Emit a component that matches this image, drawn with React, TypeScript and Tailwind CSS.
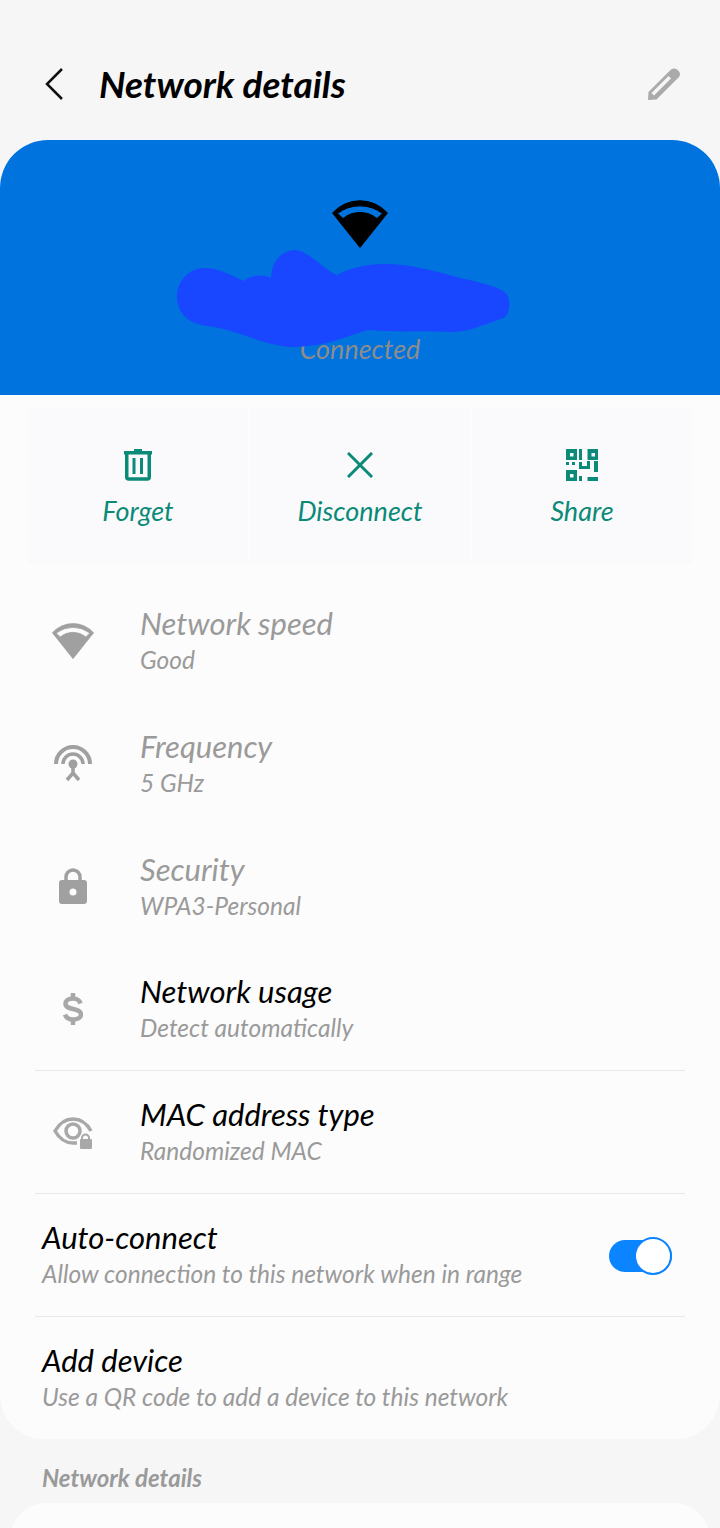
const font = "font-['Lato',sans-serif] italic";

function WifiGlyph({ className, width, height, fill }: { className?: string; width: number; height: number; fill: string }) {
  return (
    <svg className={className} width={width} height={height} viewBox="0 0 56 48">
      <path
        fillRule="evenodd"
        fill={fill}
        stroke={fill}
        strokeWidth="1"
        strokeLinejoin="round"
        d="M28 47.500L0.500 13A37 37 0 0 1 55.500 13ZM5.500 13.500L11 18.500A27 27 0 0 1 45 18.500L50.500 13.500A37 37 0 0 0 5.500 13.500Z"
      />
    </svg>
  );
}

function TrashIcon() {
  return (
    <svg width="30" height="32" viewBox="0 0 30 32" className="text-[#0b8a78]">
      <path d="M11 0h8v2h10v3.500H1V2h10z" fill="currentColor" />
      <path d="M3.750 5v23a2 2 0 0 0 2 2h18.500a2 2 0 0 0 2-2V5" fill="none" stroke="currentColor" strokeWidth="3.500" />
      <path d="M11 9v16M18.500 9v16" stroke="currentColor" strokeWidth="3" />
    </svg>
  );
}

function CloseIcon() {
  return (
    <svg width="26" height="26" viewBox="0 0 26 26">
      <path d="M2 2l22 22M24 2L2 24" stroke="#0b8a78" strokeWidth="3" strokeLinecap="square" />
    </svg>
  );
}

function QrIcon() {
  return (
    <svg width="32" height="32" viewBox="0 0 32 32" fill="#0b8a78">
      <path
        fillRule="evenodd"
        d="M0 0h11v11H0zM4 4v3.500h3.500V4zM21.500 0H32v11H21.500zM25.500 4v3.500H29V4zM0 21h11v11H0zM4 25v3.500h3.500V25z"
      />
      <path d="M13 0h3v11h-3zM0 13h3v3H0zM6 13h3v3H6zM13 13h3v4h5v-5h3v8H13zM28 12h4v11h-4zM13 27h3v5h-3zM21.500 28H32v4H21.500z" />
    </svg>
  );
}

function FrequencyIcon() {
  return (
    <svg width="40" height="38" viewBox="0 0 40 38" fill="none" stroke="#a0a0a0">
      <path d="M3 19a17 17 0 0 1 34 0" strokeWidth="4" />
      <path d="M10 19a10 10 0 0 1 20 0" strokeWidth="3.500" />
      <circle cx="20" cy="19" r="4.500" fill="#a0a0a0" stroke="none" />
      <path d="M20 22v7M20 28l-6 7M20 28l6 7" strokeWidth="3.500" />
    </svg>
  );
}

function LockIcon() {
  return (
    <svg width="28" height="36" viewBox="0 0 28 36" className="mb-[3px]">
      <path d="M7 16V9a7 7 0 0 1 14 0v7" fill="none" stroke="#a0a0a0" strokeWidth="3.500" />
      <path
        fillRule="evenodd"
        fill="#a0a0a0"
        d="M3 12h22a3 3 0 0 1 3 3v18a3 3 0 0 1-3 3H3a3 3 0 0 1-3-3V15a3 3 0 0 1 3-3zM14 20.500a3.500 3.500 0 1 0 0 7 3.500 3.500 0 0 0 0-7z"
      />
    </svg>
  );
}

function DollarIcon() {
  return (
    <svg width="20" height="34" viewBox="0 0 20 34" fill="none" stroke="#a8a8a8" strokeWidth="4.500" className="mb-[2px]">
      <path d="M10 1v5M10 28v5" />
      <path d="M17.500 11.500c-1-3-4-5-7.500-5-5 0-7.500 2.500-7.500 5.300 0 7 15.500 3.500 15.500 10.700 0 3-3 5-8 5-4 0-7-2-8-5" />
    </svg>
  );
}

function EyeLockIcon() {
  return (
    <svg width="40" height="34" viewBox="0 0 40 34" fill="none" stroke="#a8a8a8" strokeWidth="3.500">
      <path d="M38 15C33 6 27 3 20 3 12 3 6 8 2 15c4 7 10 12 18 12h4" />
      <circle cx="20" cy="15" r="7" />
      <path d="M29 24v-2a3.500 3.500 0 0 1 7 0v2" strokeWidth="2" />
      <rect x="27" y="23" width="12" height="10" rx="1" fill="#a8a8a8" stroke="none" />
    </svg>
  );
}

function ActionButton({ icon, label }: { icon: React.ReactNode; label: string }) {
  return (
    <div className="flex flex-col items-center bg-[#fafafc] pt-[42px]">
      <div className="flex h-[32px] items-center justify-center">{icon}</div>
      <span className={`${font} mt-[14px] text-[27px] leading-[32px] text-[#0b8a78]`}>{label}</span>
    </div>
  );
}

function InfoRow({
  icon,
  title,
  sub,
  muted,
  divider,
}: {
  icon: React.ReactNode;
  title: string;
  sub: string;
  muted?: boolean;
  divider?: boolean;
}) {
  return (
    <div className={`flex h-[123px] items-center pt-[1px] ${divider ? "border-b border-[#e8e8e8]" : ""}`}>
      <div className="flex w-[105px] shrink-0 items-center justify-center pr-[29px]">{icon}</div>
      <div>
        <div className={`${font} text-[31px] leading-[36px] ${muted ? "text-[#9a9a9a]" : "text-black"}`}>{title}</div>
        <div className={`${font} mt-[1px] text-[24.500px] leading-[36px] text-[#9a9a9a]`}>{sub}</div>
      </div>
    </div>
  );
}

export default function App() {
  return (
    <div className="h-[1528px] w-[720px] overflow-hidden bg-[#f6f6f6]">
      {/* Header */}
      <header className="flex h-[140px] items-center justify-between pl-[44px] pr-[39px] pt-[28px]">
        <div className="flex items-center">
          <svg width="20" height="34" viewBox="0 0 20 34" fill="none" stroke="#111" strokeWidth="2.500">
            <path d="M18 2L3 17l15 15" />
          </svg>
          <h1 className={`${font} ml-[35px] text-[37px] font-bold leading-[44px] text-black`}>Network details</h1>
        </div>
        <svg width="34" height="34" viewBox="0 0 34 34" fill="#aaa">
          <path
            fillRule="evenodd"
            d="M1 33L1.500 25L24 2.500Q27 0.500 30 2.500L32 4.500Q34 7 32 10L9.500 32.500ZM4.500 26L7 28.500L24 11.500L21.500 9Z"
          />
        </svg>
      </header>

      {/* Network banner */}
      <section className="relative flex h-[255px] flex-col items-center rounded-t-[48px] bg-[#0073de]">
        <WifiGlyph className="mt-[60px]" width={56} height={48} fill="#000" />
        <span className={`${font} mt-[83px] text-[27px] leading-[36px] text-[#8c8c8c]`}>Connected</span>
        <svg className="absolute left-0 top-0" width="720" height="255" viewBox="0 140 720 255">
          <path
            fill="#1847ff"
            d="M177 297C177 280 190 268 204 268C220 268 232 276 244 281C250 275 262 274 271 278C272 258 284 250 296 250C310 252 324 270 337 275C350 268 365 264 384 264C410 264 440 272 460 278C480 282 500 288 505 292C511 298 511 312 504 318C490 322 470 332 452 332C425 330 400 333 370 330C355 332 330 347 292 347C260 345 240 330 207 326C188 324 177 312 177 297Z"
          />
        </svg>
      </section>

      {/* Details sheet */}
      <section className="rounded-b-[44px] bg-[#fcfcfc] px-[28px] pt-[12px]">
        <div className="grid h-[156px] grid-cols-3 gap-[2px]">
          <ActionButton icon={<TrashIcon />} label="Forget" />
          <ActionButton icon={<CloseIcon />} label="Disconnect" />
          <ActionButton icon={<QrIcon />} label="Share" />
        </div>
        <div className="mt-[16px] px-[7px]">
          <InfoRow
            icon={<WifiGlyph width={42} height={36} fill="#a0a0a0" />}
            title="Network speed"
            sub="Good"
            muted
          />
          <InfoRow icon={<FrequencyIcon />} title="Frequency" sub="5 GHz" muted />
          <InfoRow icon={<LockIcon />} title="Security" sub="WPA3-Personal" muted />
          <InfoRow icon={<DollarIcon />} title="Network usage" sub="Detect automatically" divider />
          <InfoRow icon={<EyeLockIcon />} title="MAC address type" sub="Randomized MAC" divider />
          <div className="flex h-[123px] items-center justify-between border-b border-[#e8e8e8] pl-[7px] pr-[13px] pt-[1px]">
            <div>
              <div className={`${font} text-[31px] leading-[36px] text-black`}>Auto-connect</div>
              <div className={`${font} mt-[1px] text-[24.500px] leading-[36px] text-[#9a9a9a]`}>
                Allow connection to this network when in range
              </div>
            </div>
            <div className="relative h-[32px] w-[63px] rounded-full bg-[#0a84ff]">
              <div className="absolute right-0 top-[-3px] h-[38px] w-[38px] rounded-full border-2 border-[#0a84ff] bg-white" />
            </div>
          </div>
          <div className="flex h-[122px] flex-col justify-center pl-[7px] pt-[1px]">
            <div className={`${font} text-[31px] leading-[36px] text-black`}>Add device</div>
            <div className={`${font} mt-[1px] text-[24.500px] leading-[36px] text-[#9a9a9a]`}>
              Use a QR code to add a device to this network
            </div>
          </div>
        </div>
      </section>

      <div className={`${font} px-[42px] pt-[24px] text-[24px] font-bold leading-[30px] text-[#9a9a9a]`}>
        Network details
      </div>
      <div className="mx-[10px] mt-[10px] h-[60px] rounded-t-[36px] bg-[#fcfcfc]" />
    </div>
  );
}
